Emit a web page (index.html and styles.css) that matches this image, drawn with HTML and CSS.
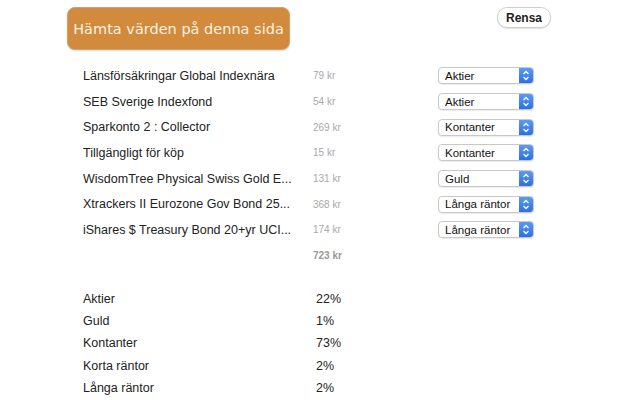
FILE: index.html
```html
<!DOCTYPE html>
<html>
<head>
<meta charset="utf-8">
<link rel="stylesheet" href="styles.css">
</head>
<body>
<div class="page">
  <div class="top">
    <button class="fetch">Hämta värden på denna sida</button>
    <button class="clear">Rensa</button>
  </div>
  <div class="holdings">
    <div class="row"><span class="name">Länsförsäkringar Global Indexnära</span><span class="amt">79 kr</span><div class="sel"><span>Aktier</span><i class="arr"><svg width="8" height="11" viewBox="0 0 8 11"><path d="M1.5 4 L4 1.5 L6.5 4 M1.5 7 L4 9.5 L6.5 7" fill="none" stroke="#fff" stroke-width="1.3"/></svg></i></div></div>
    <div class="row"><span class="name">SEB Sverige Indexfond</span><span class="amt">54 kr</span><div class="sel"><span>Aktier</span><i class="arr"><svg width="8" height="11" viewBox="0 0 8 11"><path d="M1.5 4 L4 1.5 L6.5 4 M1.5 7 L4 9.5 L6.5 7" fill="none" stroke="#fff" stroke-width="1.3"/></svg></i></div></div>
    <div class="row"><span class="name">Sparkonto 2 : Collector</span><span class="amt">269 kr</span><div class="sel"><span>Kontanter</span><i class="arr"><svg width="8" height="11" viewBox="0 0 8 11"><path d="M1.5 4 L4 1.5 L6.5 4 M1.5 7 L4 9.5 L6.5 7" fill="none" stroke="#fff" stroke-width="1.3"/></svg></i></div></div>
    <div class="row"><span class="name">Tillgängligt för köp</span><span class="amt">15 kr</span><div class="sel"><span>Kontanter</span><i class="arr"><svg width="8" height="11" viewBox="0 0 8 11"><path d="M1.5 4 L4 1.5 L6.5 4 M1.5 7 L4 9.5 L6.5 7" fill="none" stroke="#fff" stroke-width="1.3"/></svg></i></div></div>
    <div class="row"><span class="name">WisdomTree Physical Swiss Gold E...</span><span class="amt">131 kr</span><div class="sel"><span>Guld</span><i class="arr"><svg width="8" height="11" viewBox="0 0 8 11"><path d="M1.5 4 L4 1.5 L6.5 4 M1.5 7 L4 9.5 L6.5 7" fill="none" stroke="#fff" stroke-width="1.3"/></svg></i></div></div>
    <div class="row"><span class="name">Xtrackers II Eurozone Gov Bond 25...</span><span class="amt">368 kr</span><div class="sel"><span>Långa räntor</span><i class="arr"><svg width="8" height="11" viewBox="0 0 8 11"><path d="M1.5 4 L4 1.5 L6.5 4 M1.5 7 L4 9.5 L6.5 7" fill="none" stroke="#fff" stroke-width="1.3"/></svg></i></div></div>
    <div class="row"><span class="name">iShares $ Treasury Bond 20+yr UCI...</span><span class="amt">174 kr</span><div class="sel"><span>Långa räntor</span><i class="arr"><svg width="8" height="11" viewBox="0 0 8 11"><path d="M1.5 4 L4 1.5 L6.5 4 M1.5 7 L4 9.5 L6.5 7" fill="none" stroke="#fff" stroke-width="1.3"/></svg></i></div></div>
    <div class="row total"><span class="name"></span><span class="amt">723 kr</span></div>
  </div>
  <div class="summary">
    <div class="srow"><span>Aktier</span><span>22%</span></div>
    <div class="srow"><span>Guld</span><span>1%</span></div>
    <div class="srow"><span>Kontanter</span><span>73%</span></div>
    <div class="srow"><span>Korta räntor</span><span>2%</span></div>
    <div class="srow"><span>Långa räntor</span><span>2%</span></div>
  </div>
</div>
</body>
</html>
```

FILE: styles.css
```css
html, body { margin: 0; padding: 0; background: #fff; }
body { font-family: "Liberation Sans", Arial, sans-serif; color: #222; }
.page { width: 640px; height: 400px; overflow: hidden; }
.top { display: flex; justify-content: space-between; align-items: flex-start; padding: 7px 89px 0 67px; height: 56px; box-sizing: border-box; }
.fetch { font-family: "DejaVu Sans", Verdana, sans-serif; font-size: 14.5px; color: #fdf3e0; background: #d28a3c; border: 1px solid #c9a27a; border-radius: 8px; height: 43px; width: 223px; padding: 0; box-shadow: 0 1px 2px rgba(0,0,0,0.15); }
.clear { font-family: "Liberation Sans", Arial, sans-serif; font-weight: bold; font-size: 12px; color: #222; background: #fff; border: 1px solid #cfcfcf; border-radius: 10px; height: 21px; width: 54px; padding: 0; box-shadow: 0 1px 1px rgba(0,0,0,0.12); }
.holdings { padding: 7px 0 0 83px; }
.row { display: grid; grid-template-columns: 230px 125px 96px; align-items: center; height: 25.7px; }
.name { font-size: 12.5px; white-space: nowrap; }
.amt { font-size: 10px; color: #a8a8a8; }
.total .amt { font-weight: bold; color: #999; }
.sel { display: flex; height: 17px; border: 1px solid #c8c8c8; border-radius: 4px; box-sizing: border-box; background: #fff; font-size: 11.5px; align-items: center; overflow: hidden; box-shadow: 0 1px 1px rgba(0,0,0,0.08); }
.sel span { flex: 1; padding-left: 6px; color: #111; white-space: nowrap; }
.arr { display: flex; align-items: center; justify-content: center; width: 14px; height: 100%; background: linear-gradient(#5b9bf5, #2c6fe6); }
.summary { padding: 19px 0 0 83px; }
.srow { display: grid; grid-template-columns: 233px auto; height: 22.3px; align-items: center; font-size: 12.5px; }
```
